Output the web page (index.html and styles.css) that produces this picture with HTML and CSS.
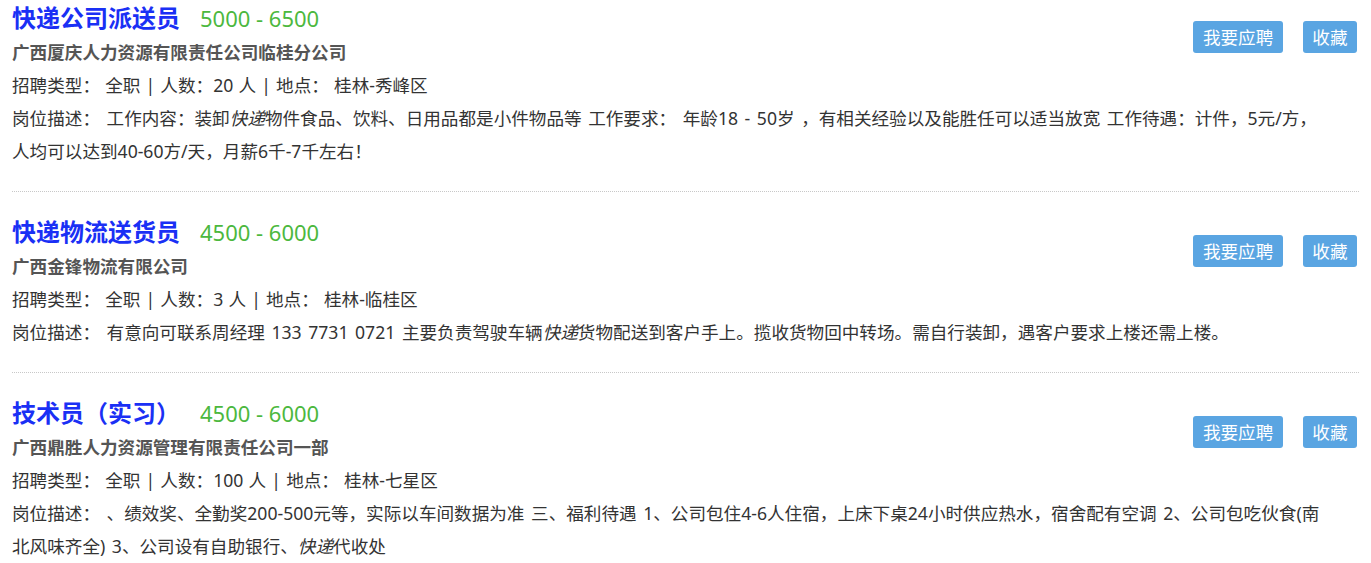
FILE: index.html
```html
<!DOCTYPE html>
<html lang="zh-CN">
<head>
<meta charset="utf-8">
<title>职位列表</title>
<link rel="stylesheet" href="styles.css">
</head>
<body>
<div class="list">
  <div class="job">
    <div class="head">
      <div class="main">
        <div class="title-row"><a class="title" href="#">快递公司派送员</a><span class="salary">5000 - 6500</span></div>
        <div class="company">广西厦庆人力资源有限责任公司临桂分公司</div>
        <div class="info">招聘类型： 全职 | 人数：20 人 | 地点： 桂林-秀峰区</div>
      </div>
      <div class="actions"><a class="btn" href="#">我要应聘</a><a class="btn" href="#">收藏</a></div>
    </div>
    <div class="desc">岗位描述： 工作内容：装卸<em>快递</em>物件食品、饮料、日用品都是小件物品等 工作要求： 年龄18 - 50岁 ，有相关经验以及能胜任可以适当放宽 工作待遇：计件，5元/方，人均可以达到40-60方/天，月薪6千-7千左右！</div>
  </div>
  <div class="job">
    <div class="head">
      <div class="main">
        <div class="title-row"><a class="title" href="#">快递物流送货员</a><span class="salary">4500 - 6000</span></div>
        <div class="company">广西金锋物流有限公司</div>
        <div class="info">招聘类型： 全职 | 人数：3 人 | 地点： 桂林-临桂区</div>
      </div>
      <div class="actions"><a class="btn" href="#">我要应聘</a><a class="btn" href="#">收藏</a></div>
    </div>
    <div class="desc">岗位描述： 有意向可联系周经理 133 7731 0721 主要负责驾驶车辆<em>快递</em>货物配送到客户手上。揽收货物回中转场。需自行装卸，遇客户要求上楼还需上楼。</div>
  </div>
  <div class="job">
    <div class="head">
      <div class="main">
        <div class="title-row"><a class="title" href="#">技术员（实习）</a><span class="salary">4500 - 6000</span></div>
        <div class="company">广西鼎胜人力资源管理有限责任公司一部</div>
        <div class="info">招聘类型： 全职 | 人数：100 人 | 地点： 桂林-七星区</div>
      </div>
      <div class="actions"><a class="btn" href="#">我要应聘</a><a class="btn" href="#">收藏</a></div>
    </div>
    <div class="desc">岗位描述： 、绩效奖、全勤奖200-500元等，实际以车间数据为准 三、福利待遇 1、公司包住4-6人住宿，上床下桌24小时供应热水，宿舍配有空调 2、公司包吃伙食(南北风味齐全) 3、公司设有自助银行、<em>快递</em>代收处</div>
  </div>
</div>
</body>
</html>
```
FILE: styles.css
```css
html, body {
  margin: 0;
  padding: 0;
  background: #fff;
}
body {
  font-family: "Noto Sans", "Noto Sans CJK SC", sans-serif;
  font-size: 17.6px;
  color: #333;
  overflow: hidden;
}
.list {
  margin-top: -22px;
  padding: 0 12px;
}
.job {
  padding: 22px 0 23px;
  border-bottom: 1px dotted #c8c8c8;
}
.head {
  display: flex;
  align-items: flex-start;
}
.main {
  flex: 1;
  min-width: 0;
}
.title-row {
  height: 36px;
  line-height: 36px;
  display: flex;
  align-items: center;
  gap: 20px;
}
.title {
  font-size: 24px;
  font-weight: bold;
  color: #1a30f5;
  text-decoration: none;
}
.salary {
  font-size: 22px;
  color: #4cb83e;
}
.company {
  font-weight: bold;
  color: #555;
  line-height: 33px;
}
.info {
  line-height: 33px;
  word-spacing: 0.6px;
}
.desc {
  line-height: 33px;
  word-spacing: 2px;
  padding-right: 29px;
}
.desc em {
  font-style: italic;
}
.actions {
  display: flex;
  gap: 20px;
  margin-top: 21px;
  margin-right: 2px;
}
.btn {
  display: block;
  height: 32px;
  line-height: 32px;
  padding: 0 9.5px;
  color: #fff;
  background: #5aa5e2;
  border-radius: 3px;
  text-decoration: none;
}
```
